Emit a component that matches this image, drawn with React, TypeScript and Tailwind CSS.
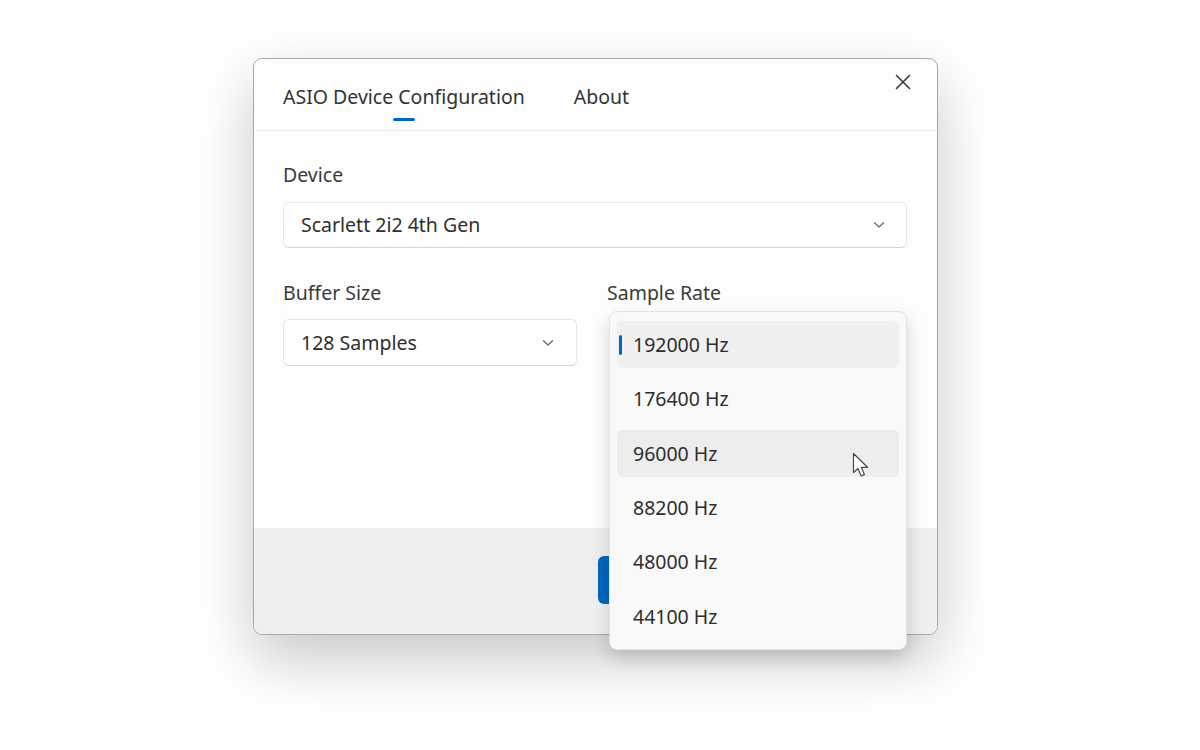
import React from "react";

const font = { fontFamily: '"Noto Sans", "Open Sans", sans-serif' };

function Chevron() {
  return (
    <svg width="12" height="8" viewBox="0 0 12 8" fill="none">
      <path d="M1.5 1.8 L6 6 L10.5 1.8" stroke="#6b6b6b" strokeWidth="1.3" strokeLinecap="round" strokeLinejoin="round" />
    </svg>
  );
}

function Cursor() {
  return (
    <svg width="20" height="28" viewBox="0 0 20 28" fill="none">
      <path
        d="M1.5 1.5 L1.5 20.5 L6 16.5 L9.2 24 L12.4 22.6 L9.3 15.3 L15.5 15.3 Z"
        fill="#ffffff"
        stroke="#4a4a4a"
        strokeWidth="1.2"
        strokeLinejoin="round"
      />
    </svg>
  );
}

const rates = ["192000 Hz", "176400 Hz", "96000 Hz", "88200 Hz", "48000 Hz", "44100 Hz"];

export default function App() {
  return (
    <div className="min-h-[750px] w-[1200px] bg-white pl-[253px] pt-[58px]" style={font}>
      <div className="relative flex h-[577px] w-[685px] flex-col rounded-[9px] border border-[#a9a9a9] bg-[#fdfdfd] shadow-[0_24px_60px_rgba(0,0,0,0.22)]">
        {/* tab header */}
        <div className="relative flex h-[72px] items-start gap-[49px] border-b border-[#ececec] px-[29px] pt-[23px] text-[19.5px] text-[#333333]">
          <div className="relative flex flex-col items-center">
            <span className="leading-[29px]">ASIO Device Configuration</span>
            <span className="mt-[7px] h-[3px] w-[22px] rounded-full bg-[#0067c0]" />
          </div>
          <span className="leading-[29px]">About</span>
          <button className="absolute right-[24px] top-[13px] flex h-[20px] w-[20px] items-center justify-center">
            <svg width="16" height="16" viewBox="0 0 16 16">
              <path d="M1.5 1.5 L14.5 14.5 M14.5 1.5 L1.5 14.5" stroke="#3a3a3a" strokeWidth="1.6" strokeLinecap="round" />
            </svg>
          </button>
        </div>

        {/* form body */}
        <div className="flex flex-1 flex-col bg-[#fdfdfd] px-[29px] pt-[30px]">
          <label className="text-[19.5px] leading-[28px] text-[#3a3a3a]">Device</label>
          <div className="mt-[13px] flex h-[46px] w-[624px] items-center justify-between rounded-[6px] border border-[#e6e6e6] border-b-[#d6d6d6] bg-white pl-[17px] pr-[21px] text-[19.5px] text-[#2e2e2e]">
            <span>Scarlett 2i2 4th Gen</span>
            <Chevron />
          </div>

          <div className="mt-[31px] flex gap-[30px]">
            <div className="flex flex-col">
              <label className="text-[19.5px] leading-[28px] text-[#3a3a3a]">Buffer Size</label>
              <div className="mt-[12px] flex h-[47px] w-[294px] items-center justify-between rounded-[6px] border border-[#e6e6e6] border-b-[#d6d6d6] bg-white pl-[17px] pr-[22px] text-[19.5px] text-[#2e2e2e]">
                <span>128 Samples</span>
                <Chevron />
              </div>
            </div>
            <div className="flex flex-col">
              <label className="text-[19.5px] leading-[28px] text-[#3a3a3a]">Sample Rate</label>
            </div>
          </div>
        </div>

        {/* footer */}
        <div className="flex h-[106px] items-start rounded-b-[9px] bg-[#efefef] pl-[344px] pt-[28px]">
          <button className="h-[48px] w-[170px] rounded-[6px] bg-[#0067c0]" />
        </div>

        {/* open sample rate list */}
        <div className="absolute left-[355px] top-[252px] flex w-[298px] flex-col gap-[7.4px] rounded-[8px] border border-[#e3e3e3] bg-[#f9f9f9] px-[7px] py-[9px] shadow-[0_8px_18px_rgba(0,0,0,0.16)]">
          {rates.map((r, i) => (
            <div
              key={r}
              className={
                "relative flex h-[47px] items-center rounded-[5px] pl-[16px] text-[19.5px] text-[#2e2e2e] " +
                (i === 0 ? "bg-[#f0f0f0]" : i === 2 ? "bg-[#ededed]" : "")
              }
            >
              {i === 0 && <span className="absolute left-[2px] top-[14px] h-[20px] w-[3px] rounded-full bg-[#0067c0]" />}
              <span>{r}</span>
              {i === 2 && (
                <span className="absolute left-[235px] top-[22px]">
                  <Cursor />
                </span>
              )}
            </div>
          ))}
        </div>
      </div>
    </div>
  );
}
